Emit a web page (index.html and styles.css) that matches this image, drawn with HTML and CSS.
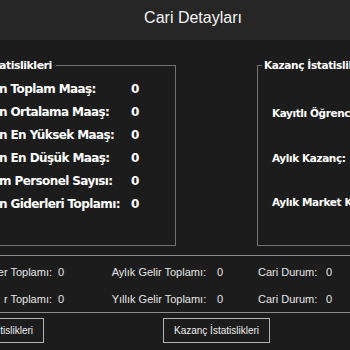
FILE: index.html
```html
<!DOCTYPE html>
<html lang="tr">
<head>
    <meta charset="UTF-8">
    <meta name="viewport" content="width=device-width, initial-scale=1.0">
    <title>Cari Detayları</title>
    <link rel="stylesheet" href="styles.css">
</head>
<body>
    <div class="window">
        <header class="titleBar">
            <h1 class="title">Cari Detayları</h1>
        </header>

        <main class="stats">
            <fieldset class="group staffGroup">
                <legend class="staffLegend">atislikleri</legend>
                <div class="staffRows">
                    <span class="staffLabel">n Toplam Maaş:</span><span class="staffValue">0</span>
                    <span class="staffLabel">n Ortalama Maaş:</span><span class="staffValue">0</span>
                    <span class="staffLabel">n En Yüksek Maaş:</span><span class="staffValue">0</span>
                    <span class="staffLabel">n En Düşük Maaş:</span><span class="staffValue">0</span>
                    <span class="staffLabel">m Personel Sayısı:</span><span class="staffValue">0</span>
                    <span class="staffLabel">n Giderleri Toplamı:</span><span class="staffValue">0</span>
                </div>
            </fieldset>

            <fieldset class="group incomeGroup">
                <legend class="incomeLegend">Kazanç İstatislikleri</legend>
                <div class="incomeRows">
                    <div class="incomeLabel">Kayıtlı Öğrenci Sayısı:</div>
                    <div class="incomeLabel">Aylık Kazanç:</div>
                    <div class="incomeLabel">Aylık Market Kazancı:</div>
                </div>
            </fieldset>
        </main>

        <section class="totals">
            <span class="totLabel firstCol">er Toplamı:</span><span class="totValue">0</span>
            <span class="totLabel">Aylık Gelir Toplamı:</span><span class="totValue">0</span>
            <span class="totLabel">Cari Durum:</span><span class="totValue">0</span>

            <span class="totLabel firstCol">r Toplamı:</span><span class="totValue">0</span>
            <span class="totLabel">Yıllık Gelir Toplamı:</span><span class="totValue">0</span>
            <span class="totLabel">Cari Durum:</span><span class="totValue">0</span>
        </section>

        <div class="buttons">
            <button class="tabBtn leftBtn">tislikleri</button>
            <button class="tabBtn rightBtn">Kazanç İstatislikleri</button>
        </div>
    </div>
</body>
</html>
```

FILE: styles.css
```css
html, body{
    margin: 0;
    padding: 0;
}
body{
    background-color: #1c1c1c;
    width: 350px;
    height: 350px;
    overflow: hidden;
}
.window{
    width: 350px;
    height: 350px;
    overflow: hidden;
    color: #f2f2f2;
}

/* title bar */
.titleBar{
    height: 40px;
    background-color: #262626;
    padding-left: 36px;
}
.title{
    margin: 0;
    font-family: "Liberation Sans", Arial, sans-serif;
    font-weight: normal;
    font-size: 16px;
    line-height: 35px;
    text-align: center;
    color: #f4f4f4;
}

/* group boxes */
.stats{
    display: flex;
    margin-top: 19px;
    height: 187px;
}
.group{
    box-sizing: border-box;
    margin: 0;
    padding: 0;
    height: 187px;
    min-width: 0;
    border: 1px solid #727272;
    font-family: "DejaVu Sans", Verdana, sans-serif;
    font-weight: bold;
    color: #ffffff;
}
.staffGroup{
    margin-left: -20px;
    width: 196px;
    flex: none;
}
.incomeGroup{
    margin-left: 81px;
    width: 200px;
    flex: none;
}
.staffLegend{
    margin-left: 18px;
    padding: 0 4px 0 0;
    font-size: 11px;
    line-height: 13px;
    letter-spacing: -0.5px;
}
.incomeLegend{
    margin-left: 4px;
    padding: 0 2px;
    font-size: 10.5px;
    line-height: 13px;
    letter-spacing: -0.35px;
    white-space: nowrap;
}

.staffRows{
    display: grid;
    grid-template-columns: 132px auto;
    row-gap: 9px;
    padding-top: 10px;
    margin-left: 18px;
    font-size: 12px;
    line-height: 14px;
    letter-spacing: -0.6px;
    white-space: nowrap;
}
.staffValue{
    letter-spacing: 0;
}

.incomeRows{
    display: flex;
    flex-direction: column;
    gap: 30.7px;
    padding-top: 34px;
    padding-left: 14px;
    font-size: 10.5px;
    line-height: 14px;
    letter-spacing: -0.4px;
    white-space: nowrap;
}

/* totals panel */
.totals{
    display: grid;
    grid-template-columns: 68px 53.7px 105.3px 41px 68px auto;
    row-gap: 14px;
    margin-top: 9px;
    margin-left: -10px;
    padding: 10px 0 6px;
    border-top: 1px solid #8c8c8c;
    border-bottom: 1px solid #8c8c8c;
    font-family: "Liberation Sans", Arial, sans-serif;
    font-size: 11px;
    line-height: 13px;
    color: #e6e6e6;
    white-space: nowrap;
}
.firstCol{
    text-align: right;
    padding-right: 6px;
}

/* bottom buttons */
.buttons{
    display: flex;
    margin-top: 5px;
}
.tabBtn{
    box-sizing: border-box;
    height: 25px;
    width: 107px;
    flex: none;
    background-color: #1c1c1c;
    border: 1px solid #b4b4b4;
    border-radius: 0;
    color: #ececec;
    font-family: "Liberation Sans", Arial, sans-serif;
    font-size: 10px;
    padding: 0;
    white-space: nowrap;
}
.leftBtn{
    margin-left: -63px;
    text-align: right;
    padding-right: 10px;
}
.rightBtn{
    margin-left: 119px;
}
```
